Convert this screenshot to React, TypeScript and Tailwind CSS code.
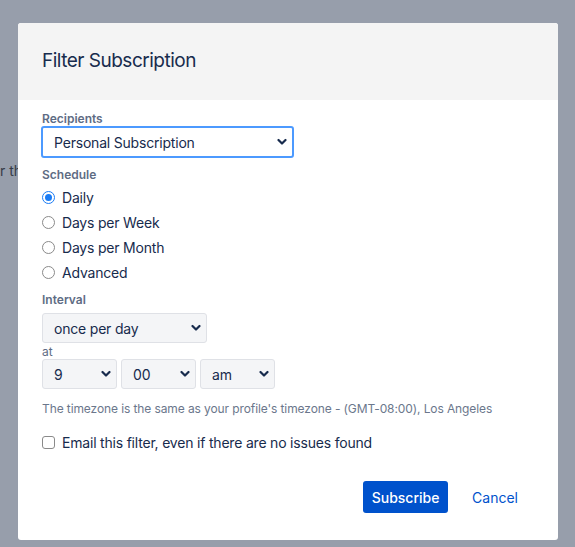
const font = { fontFamily: 'Inter, "Noto Sans", sans-serif' };

function Chevron() {
  return (
    <svg className="absolute right-[5px] top-1/2 -translate-y-1/2" width="10" height="7" viewBox="0 0 10 7" fill="none">
      <path d="M1.5 1.5 L5 5 L8.5 1.5" stroke="#172b4d" strokeWidth="2.2" strokeLinecap="round" strokeLinejoin="round" />
    </svg>
  );
}

function Select({ value, width, focused }: { value: string; width: string; focused?: boolean }) {
  return (
    <div
      className={`relative flex items-center rounded-[3px] ${width} ${
        focused ? 'h-[32px] border-2 border-[#4c9aff] bg-white pl-[11px]' : 'h-[30px] border border-[#dfe1e6] bg-[#f4f5f7] pl-[11px]'
      }`}
    >
      <span className="text-[14px] tracking-[-0.2px] text-[#172b4d]">{value}</span>
      <Chevron />
    </div>
  );
}

function Radio({ label, checked }: { label: string; checked?: boolean }) {
  return (
    <label className="flex h-[25px] items-center gap-[7px]">
      {checked ? (
        <span className="flex h-[13px] w-[13px] items-center justify-center rounded-full border-[1.5px] border-[#1a7cf5] bg-white">
          <span className="h-[7px] w-[7px] rounded-full bg-[#1a7cf5]" />
        </span>
      ) : (
        <span className="h-[13px] w-[13px] rounded-full border border-[#8a8a8a] bg-white" />
      )}
      <span className="text-[14px] tracking-[-0.2px] text-[#172b4d]">{label}</span>
    </label>
  );
}

export default function App() {
  return (
    <div className="relative h-[547px] w-[575px] overflow-hidden bg-[#979eab]" style={font}>
      {/* page behind the overlay */}
      <p className="pt-[160px] text-[14px] text-[#353b47]">r the</p>

      <div className="absolute left-[18px] top-[23px] flex h-[517px] w-[540px] flex-col rounded-[3px] bg-white">
        <div className="flex h-[77px] items-center rounded-t-[3px] bg-[#f4f4f4] px-[24px]">
          <h1 className="text-[19px] tracking-[-0.5px] text-[#172b4d]">Filter Subscription</h1>
        </div>

        <div className="flex flex-col px-[24px] pt-[12px]">
          <div className="text-[12px] font-semibold leading-[14px] text-[#5e6c84]">Recipients</div>
          <div className="-ml-[1px]">
            <Select value="Personal Subscription" width="w-[253px]" focused />
          </div>

          <div className="mt-[10px] text-[12px] font-semibold leading-[14px] text-[#5e6c84]">Schedule</div>
          <div className="mt-[3px] flex flex-col">
            <Radio label="Daily" checked />
            <Radio label="Days per Week" />
            <Radio label="Days per Month" />
            <Radio label="Advanced" />
          </div>

          <div className="mt-[8px] text-[12px] font-semibold leading-[14px] text-[#5e6c84]">Interval</div>
          <div className="mt-[6px]">
            <Select value="once per day" width="w-[165px]" />
          </div>
          <div className="mt-[2px] text-[12px] leading-[14px] text-[#5e6c84]">at</div>
          <div className="flex gap-[4px]">
            <Select value="9" width="w-[75px]" />
            <Select value="00" width="w-[75px]" />
            <Select value="am" width="w-[75px]" />
          </div>

          <p className="mt-[12px] text-[12px] leading-[16px] tracking-[-0.1px] text-[#6b778c]">
            The timezone is the same as your profile's timezone - (GMT-08:00), Los Angeles
          </p>

          <label className="mt-[15px] flex h-[20px] items-center gap-[7px]">
            <span className="h-[13px] w-[13px] rounded-[3px] border border-[#8a8a8a] bg-white" />
            <span className="text-[14px] tracking-[-0.2px] text-[#172b4d]">Email this filter, even if there are no issues found</span>
          </label>
        </div>

        <div className="mt-[29px] flex items-center justify-end gap-[12px] pr-[28px]">
          <button className="h-[32px] w-[85px] rounded-[3px] bg-[#0052cc] text-[14px] font-medium text-white">
            Subscribe
          </button>
          <button className="h-[32px] px-[12px] text-[14px] text-[#0052cc]">Cancel</button>
        </div>
      </div>
    </div>
  );
}
